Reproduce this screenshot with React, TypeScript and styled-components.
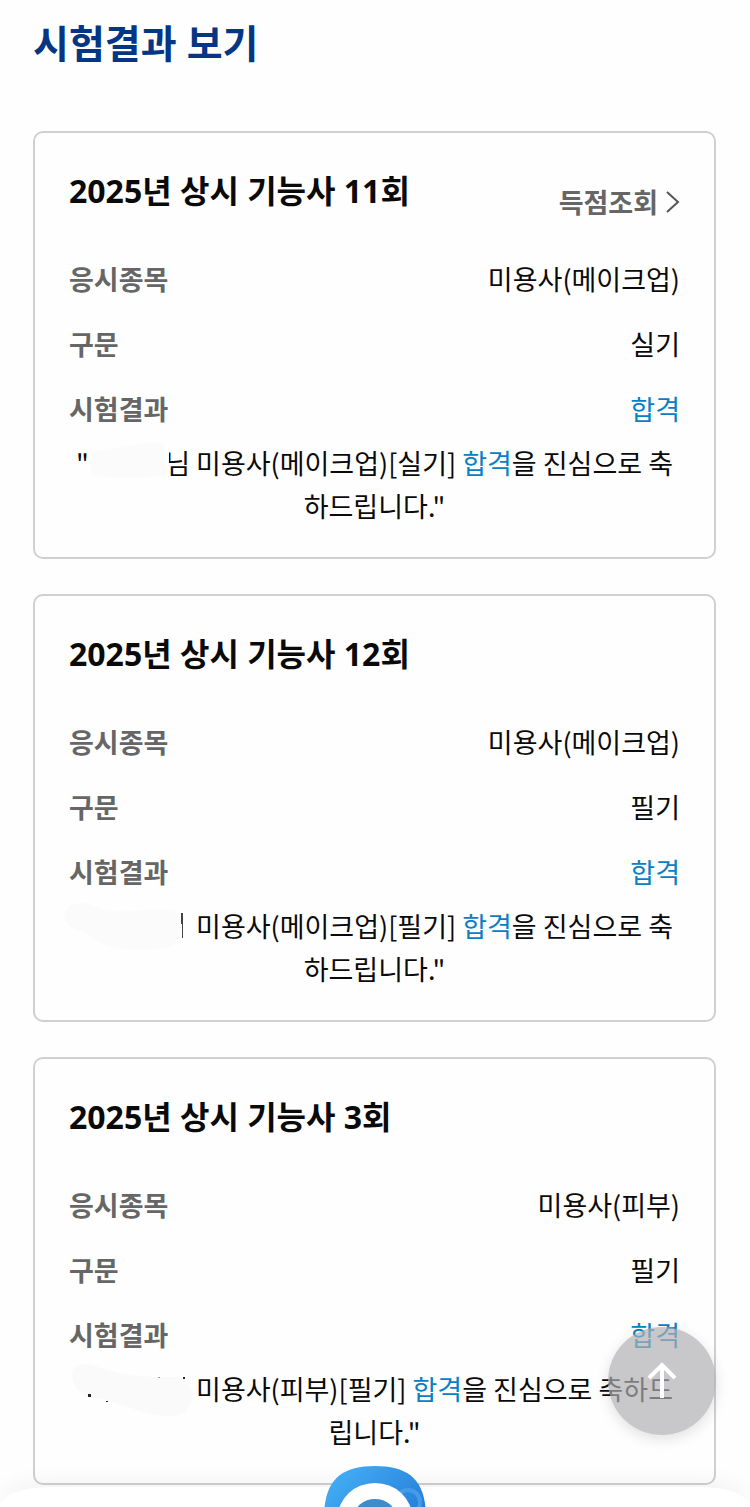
import React from "react";
import styled, { createGlobalStyle } from "styled-components";

const GlobalStyle = createGlobalStyle`
  * { box-sizing: border-box; }
  body {
    margin: 0;
    background: #fefefe;
    color: #0a0a0a;
    font-family: "Noto Sans CJK KR", "Noto Sans", sans-serif;
    font-size: 27px;
    overflow-x: hidden;
  }
`;

const Page = styled.main`
  padding: 13px 34px 22px 33px;
`;

const PageTitle = styled.h1`
  margin: 0 0 58px;
  font-family: "Noto Sans", "Noto Sans CJK KR", sans-serif;
  font-size: 39px;
  line-height: 60px;
  font-weight: 700;
  color: #053685;
`;

const CardList = styled.div`
  display: flex;
  flex-direction: column;
  gap: 35px;
`;

const Card = styled.article`
  border: 2px solid #d0d0d0;
  border-radius: 10px;
  padding: 34px 34px 30px;
`;

const CardHeader = styled.header`
  display: flex;
  justify-content: space-between;
  align-items: flex-end;
  height: 59px;
  margin-bottom: 33px;
`;

const CardTitle = styled.h2`
  margin: 0;
  align-self: flex-start;
  font-family: "Noto Sans", "Noto Sans CJK KR", sans-serif;
  font-size: 32px;
  line-height: 48px;
  font-weight: 700;
`;

const ScoreLink = styled.a`
  display: flex;
  align-items: center;
  gap: 8px;
  line-height: 48px;
  font-weight: 700;
  color: #666;
  text-decoration: none;
`;

const Details = styled.dl`
  display: flex;
  flex-direction: column;
  gap: 25px;
  margin: 0 0 12px;
`;

const Row = styled.div`
  display: flex;
  justify-content: space-between;
  line-height: 40px;
`;

const Label = styled.dt`
  font-weight: 700;
  color: #666;
`;

const Value = styled.dd<{ $pass?: boolean }>`
  margin: 0;
  color: ${(p) => (p.$pass ? "#0980c4" : "inherit")};
`;

const Message = styled.p`
  margin: 0;
  line-height: 43px;
  text-align: center;
  word-break: break-all;
`;

const Pass = styled.span`
  color: #0980c4;
`;

const Redacted = styled.span`
  position: relative;
  display: inline-flex;
  justify-content: space-between;
  width: 114px;
  height: 43px;
  vertical-align: top;
`;

const Smudge = styled.svg`
  position: absolute;
  top: -6px;
  left: -16px;
`;

const TopButton = styled.button`
  position: fixed;
  right: 34px;
  bottom: 72px;
  display: flex;
  align-items: center;
  justify-content: center;
  width: 108px;
  height: 108px;
  padding: 0;
  border: 0;
  border-radius: 50%;
  background: rgba(175, 175, 178, 0.69);
  box-shadow: 0 4px 14px rgba(0, 0, 0, 0.12);
`;

const BottomBar = styled.nav`
  position: fixed;
  left: 0;
  right: 0;
  bottom: 0;
  display: flex;
  justify-content: center;
  height: 20px;
  border-radius: 50px 50px 0 0 / 20px 20px 0 0;
  background: #fff;
  box-shadow: 0 -4px 22px rgba(0, 0, 0, 0.06);
`;

const HomeLink = styled.a`
  position: absolute;
  top: -21px;
  display: block;
  height: 41px;
  overflow: hidden;
`;

type Mark = "partial" | "bar" | "dots";

function HiddenName({ mark }: { mark: Mark }) {
  return (
    <Redacted>
      {mark === "partial" && (
        <>
          <span>"</span>
          <span>님</span>
        </>
      )}
      <Smudge width="140" height="60" viewBox="0 0 140 60" aria-hidden="true">
        {mark === "partial" && (
          <>
            <path d="M98 12H109V26L108 44H98Z" fill="#fefefe" />
            <path d="M32 16C50 17 68 7 103 8L107 40C84 43 50 44 31 40Z" fill="#fbfbfb" />
          </>
        )}
        {mark === "bar" && (
          <>
            <path d="M5 15C9 4 22 2 34 8C58 19 88 9 111 12C126 14 124 48 107 50C75 53 50 54 30 38C20 31 1 29 5 15Z" fill="#fbfbfb" />
            <path d="M121 15H123V40H122V26H121Z" fill="#444" />
          </>
        )}
        {mark === "dots" && (
          <>
            <path d="M12 13C12 2 28 1 40 7C68 16 88 16 113 16C139 15 139 55 112 55C86 57 64 40 31 37C19 34 12 23 12 13Z" fill="#fafafa" />
            <path d="M28 33h3v3h-3zM46 40h2v1h-2zM123 16h2v2h-2z" fill="#222" />
            <path d="M98 16h2v1h-2z" fill="#999" />
          </>
        )}
      </Smudge>
    </Redacted>
  );
}

interface Result {
  round: string;
  subject: string;
  type: string;
  hasScore?: boolean;
  mark: Mark;
}

const results: Result[] = [
  { round: "11회", subject: "미용사(메이크업)", type: "실기", hasScore: true, mark: "partial" },
  { round: "12회", subject: "미용사(메이크업)", type: "필기", mark: "bar" },
  { round: "3회", subject: "미용사(피부)", type: "필기", mark: "dots" },
];

function ResultCard({ result }: { result: Result }) {
  return (
    <Card>
      <CardHeader>
        <CardTitle>{`2025년 상시 기능사 ${result.round}`}</CardTitle>
        {result.hasScore && (
          <ScoreLink href="#score">
            득점조회
            <svg width="14" height="24" viewBox="0 0 14 24" fill="none" stroke="#555" strokeWidth="2" aria-hidden="true">
              <path d="M1 2L12 12L1 22" />
            </svg>
          </ScoreLink>
        )}
      </CardHeader>
      <Details>
        <Row>
          <Label>응시종목</Label>
          <Value>{result.subject}</Value>
        </Row>
        <Row>
          <Label>구문</Label>
          <Value>{result.type}</Value>
        </Row>
        <Row>
          <Label>시험결과</Label>
          <Value $pass>합격</Value>
        </Row>
      </Details>
      <Message>
        <HiddenName mark={result.mark} />
        {` ${result.subject}[${result.type}] `}
        <Pass>합격</Pass>을 진심으로 축하드립니다."
      </Message>
    </Card>
  );
}

export default function App() {
  return (
    <>
      <GlobalStyle />
      <Page>
        <PageTitle>시험결과 보기</PageTitle>
        <CardList>
          {results.map((result) => (
            <ResultCard key={result.round} result={result} />
          ))}
        </CardList>
      </Page>
      <BottomBar aria-label="하단 메뉴">
        <HomeLink href="#home" aria-label="홈">
          <svg width="104" height="104" viewBox="0 0 104 104">
            <defs>
              <linearGradient id="home" x1="0" y1="0" x2="1" y2="1">
                <stop offset="0" stopColor="#48b4f8" />
                <stop offset="0.5" stopColor="#2f8de2" />
                <stop offset="1" stopColor="#1c66c4" />
              </linearGradient>
            </defs>
            <path d="M52 0C86 0 103 14 103 52C103 88 88 103 52 103C16 103 1 88 1 52C1 14 18 0 52 0Z" fill="url(#home)" />
            <circle cx="85" cy="36" r="12" fill="none" stroke="#459be8" strokeWidth="4" />
            <ellipse cx="52" cy="51" rx="37" ry="34" fill="#fff" />
            <ellipse cx="52" cy="51" rx="21" ry="18" fill="#3f8ccb" />
          </svg>
        </HomeLink>
      </BottomBar>
      <TopButton type="button" aria-label="맨 위로">
        <svg width="34" height="40" viewBox="0 0 34 40" fill="none" stroke="#fff" strokeWidth="4" aria-hidden="true">
          <path d="M17 3V37M4 17L17 4L30 17" />
        </svg>
      </TopButton>
    </>
  );
}
